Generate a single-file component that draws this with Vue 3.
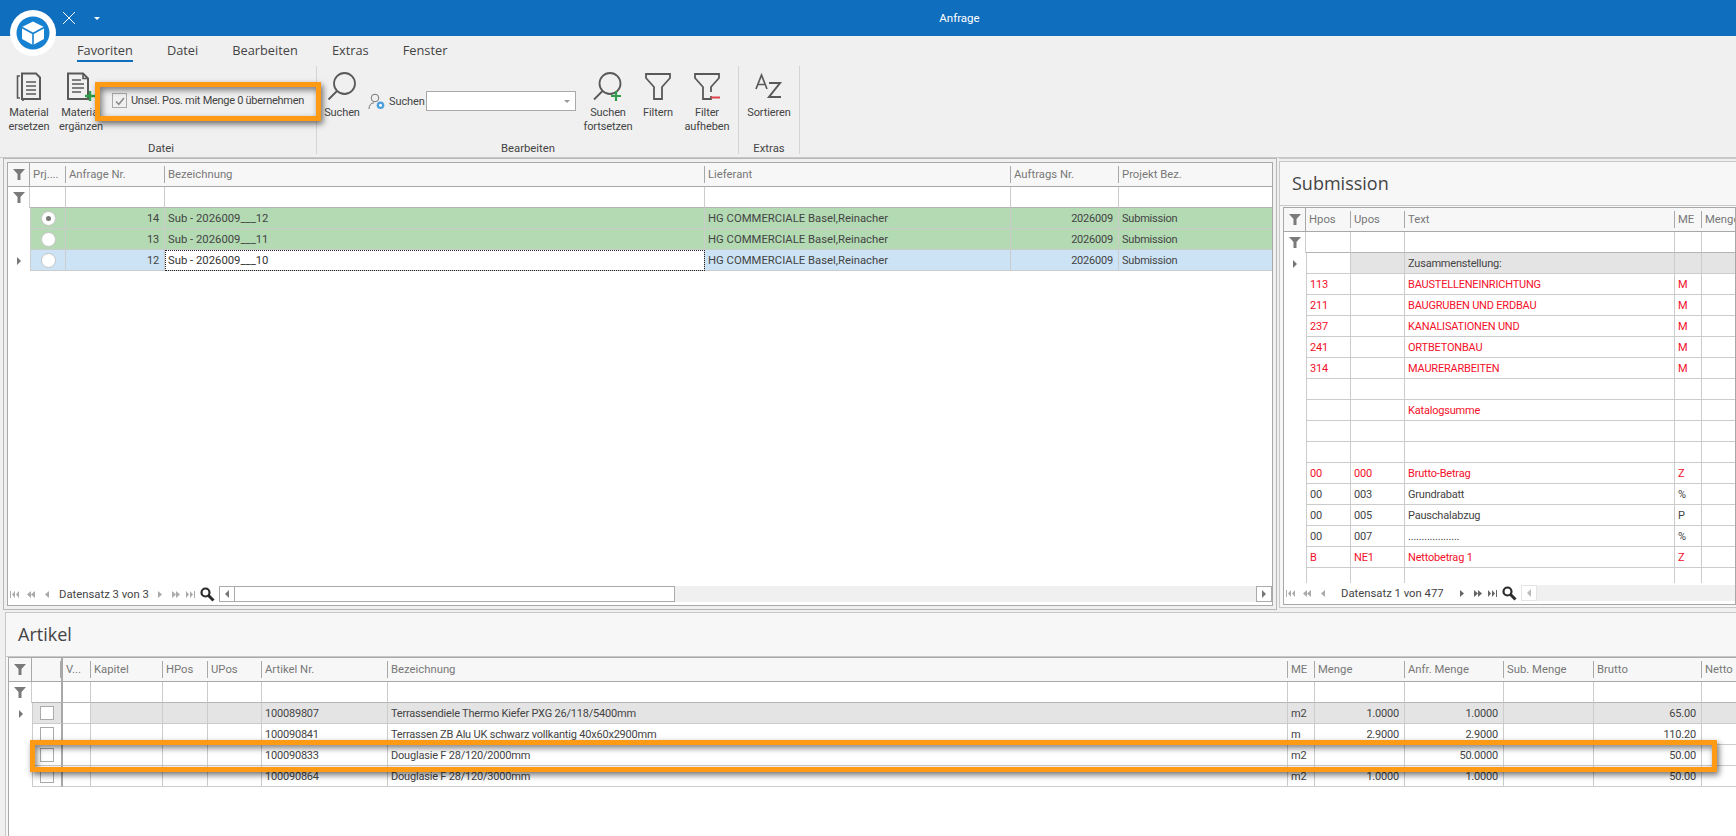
<template>
  <div class="app">
    <div class="titlebar">
      <svg class="qat-x" width="14" height="14" viewBox="0 0 14 14"><path d="M1 1l12 12M13 1L1 13" stroke="#fff" stroke-width="1" fill="none" /></svg>
      <span class="qat-caret"></span>
      <span class="title">Anfrage</span>
    </div>
    <svg class="logo" width="46" height="46" viewBox="0 0 46 46">
      <circle cx="23" cy="23" r="23" fill="#fff" />
      <circle cx="23" cy="23" r="16.5" fill="#1681d0" />
      <path d="M23 11.5l11 5.5v12l-11 6-11-6V17z" fill="#fff" />
      <path d="M12 17.500l11 6 11-6M23 23.500V35" stroke="#1681d0" stroke-width="1.600" fill="none" />
    </svg>

    <div class="ribbon">
      <div class="tabs">
        <span v-for="t in tabs" :key="t" class="tab" :class="{ active: t === 'Favoriten' }">{{ t }}</span>
      </div>
      <div class="groups">
        <div class="group group-datei">
          <div class="items">
            <div class="rbtn w46">
              <svg width="28" height="30" viewBox="0 0 28 30" fill="none" stroke="#595959" stroke-width="1.600">
                <path d="M5 4H2.500v22H5M8 29V7" />
                <path d="M7 1.500h14l4 4V27H7V1.500z" fill="#f0f0f0" stroke-width="2" />
                <path d="M11 10h10M11 14h10M11 18h10M11 22h10" />
              </svg>
              <span>Material<br />ersetzen</span>
            </div>
            <div class="rbtn w46 gap7">
              <svg width="30" height="30" viewBox="0 0 30 30" fill="none" stroke="#595959" stroke-width="1.600">
                <path d="M2 1.500h15l5 5V27H2V1.500z" stroke-width="2" />
                <path d="M17 1.500v5h5" />
                <path d="M6 8h9M6 12h12M6 16h12M6 20h9" />
                <path d="M24 19v10M19 24h10" stroke="#2e9e4a" stroke-width="2.400" />
              </svg>
              <span>Material<br />ergänzen</span>
            </div>
            <label class="check-line">
              <span class="check"><svg width="12" height="12" viewBox="0 0 12 12"><path d="M2 6.500l2.800 2.800L10 3" stroke="#8a8a8a" stroke-width="1.500" fill="none" /></svg></span>
              Unsel. Pos. mit Menge 0 übernehmen
            </label>
          </div>
          <div class="group-label">Datei</div>
        </div>

        <div class="group group-bearb">
          <div class="items">
            <div class="rbtn w40">
              <svg width="30" height="30" viewBox="0 0 30 30" fill="none" stroke="#595959" stroke-width="1.800">
                <circle cx="17.500" cy="11.500" r="10.500" />
                <path d="M10 19L1.500 27.500" />
              </svg>
              <span>Suchen</span>
            </div>
            <div class="search-line">
              <svg width="17" height="17" viewBox="0 0 17 17" fill="none">
                <circle cx="7" cy="5" r="3.800" stroke="#777" />
                <path d="M1 16c0-4 2-6 5-6.200" stroke="#777" />
                <circle cx="12.500" cy="12.300" r="3.800" fill="#4a9fdc" />
                <circle cx="12.500" cy="12.300" r="1.500" fill="#fff" />
              </svg>
              <span class="search-text">Suchen</span>
              <span class="combo"><i></i></span>
            </div>
            <div class="rbtn w60">
              <svg width="32" height="30" viewBox="0 0 32 30" fill="none" stroke="#595959" stroke-width="1.800">
                <circle cx="18" cy="11.500" r="10.500" />
                <path d="M10.500 19L2 27.500" />
                <path d="M24 19v10M19 24h10" stroke="#2e9e4a" stroke-width="2.200" />
              </svg>
              <span>Suchen<br />fortsetzen</span>
            </div>
            <div class="rbtn w40">
              <svg width="28" height="30" viewBox="0 0 28 30" fill="none" stroke="#595959" stroke-width="1.800">
                <path d="M2 2h24v4l-8 9v12h-8V15L2 6z" />
              </svg>
              <span>Filtern</span>
            </div>
            <div class="rbtn w50 gap2">
              <svg width="28" height="30" viewBox="0 0 28 30" fill="none" stroke="#595959" stroke-width="1.800">
                <path d="M18 24v3h-8V15L2 6V2h24v4l-8 9v5" />
                <path d="M18 25.500h9" stroke="#e0424a" stroke-width="2" />
              </svg>
              <span>Filter<br />aufheben</span>
            </div>
          </div>
          <div class="group-label bearb-label">Bearbeiten</div>
        </div>

        <div class="group group-extras">
          <div class="items">
            <div class="rbtn w60">
              <svg width="28" height="30" viewBox="0 0 28 30" fill="none" stroke="#595959" stroke-width="1.700">
                <path d="M1 17L6.500 3 12 17M3 12.500h7" />
                <path d="M14 11h11L14 25h12" stroke-width="2" />
              </svg>
              <span>Sortieren</span>
            </div>
          </div>
          <div class="group-label">Extras</div>
        </div>
      </div>
    </div>

    <div class="main">
      <div class="top-split">
        <div class="panel-left">
          <div class="grid">
            <div class="row head" :style="colStyle(anfrageCols)">
              <div class="cell ind"><svg class="funnel" width="12" height="11" viewBox="0 0 12 11"><path d="M0 0h12L7.500 5v6h-3V5z" /></svg></div>
              <div v-for="c in anfrageCols.slice(1)" :key="c.t" class="cell hcell">{{ c.t }}</div>
            </div>
            <div class="row filter" :style="colStyle(anfrageCols)">
              <div class="cell ind"><svg class="funnel" width="12" height="11" viewBox="0 0 12 11"><path d="M0 0h12L7.500 5v6h-3V5z" /></svg></div>
              <div v-for="c in anfrageCols.slice(1)" :key="c.t" class="cell"></div>
            </div>
            <div v-for="r in anfrageRows" :key="r.nr" class="row data" :class="r.cls" :style="colStyle(anfrageCols)">
              <div class="cell ind"><i v-if="r.current" class="pointer"></i></div>
              <div class="cell first tinted center"><span class="radio" :class="{ on: r.on }"></span></div>
              <div class="cell tinted right">{{ r.nr }}</div>
              <div class="cell tinted wide" :class="{ focus: r.current }">{{ r.bez }}</div>
              <div class="cell tinted wide">HG COMMERCIALE Basel,Reinacher</div>
              <div class="cell tinted right">2026009</div>
              <div class="cell tinted">Submission</div>
            </div>
            <div class="spacer"></div>
            <div class="pager">
              <svg v-for="n in navBack" :key="n.w" class="nav" :style="{ marginRight: n.m + 'px' }" :width="n.w" height="9" :viewBox="`0 0 ${n.w} 9`"><path :d="n.d" fill="#aaa" /></svg>
              <span class="pager-text w-left">Datensatz 3 von 3</span>
              <svg v-for="n in navFwd" :key="n.w" class="nav" :style="{ marginRight: n.m + 'px' }" :width="n.w" height="9" :viewBox="`0 0 ${n.w} 9`"><path :d="n.d" fill="#aaa" /></svg>
              <svg class="lens" width="15" height="15" viewBox="0 0 15 15" fill="none" stroke="#2b2b2b"><circle cx="5.500" cy="5.500" r="4" stroke-width="2.200" /><path d="M8.500 8.500l5 5" stroke-width="3" /></svg>
              <div class="hscroll">
                <span class="sb-btn"><i class="arr-l"></i></span>
                <span class="sb-thumb"></span>
                <span class="sb-fill"></span>
                <span class="sb-btn end"><i class="arr-r"></i></span>
              </div>
            </div>
          </div>
        </div>

        <div class="panel-right">
          <div class="pane">
            <div class="pane-title">Submission</div>
            <div class="grid-wrap">
              <div class="grid">
                <div class="row head" :style="colStyle(subCols)">
                  <div class="cell ind"><svg class="funnel" width="12" height="11" viewBox="0 0 12 11"><path d="M0 0h12L7.500 5v6h-3V5z" /></svg></div>
                  <div v-for="c in subCols.slice(1)" :key="c.t" class="cell hcell">{{ c.t }}</div>
                </div>
                <div class="row filter" :style="colStyle(subCols)">
                  <div class="cell ind"><svg class="funnel" width="12" height="11" viewBox="0 0 12 11"><path d="M0 0h12L7.500 5v6h-3V5z" /></svg></div>
                  <div v-for="c in subCols.slice(1)" :key="c.t" class="cell"></div>
                </div>
                <div class="rows-clip">
                  <div v-for="(r, i) in subRows" :key="i" class="row data" :class="{ red: r[4], grey: i === 0 }" :style="colStyle(subCols)">
                    <div class="cell ind"><i v-if="i === 0" class="pointer"></i></div>
                    <div class="cell first">{{ r[0] }}</div>
                    <div class="cell tinted">{{ r[1] }}</div>
                    <div class="cell tinted">{{ r[2] }}</div>
                    <div class="cell tinted">{{ r[3] }}</div>
                    <div class="cell tinted"></div>
                  </div>
                </div>
                <div class="pager">
                  <svg v-for="n in navBack" :key="n.w" class="nav" :style="{ marginRight: n.m + 'px' }" :width="n.w" height="9" :viewBox="`0 0 ${n.w} 9`"><path :d="n.d" fill="#aaa" /></svg>
                  <span class="pager-text w-right">Datensatz 1 von 477</span>
                  <svg v-for="n in navFwd" :key="n.w" class="nav" :style="{ marginRight: n.m + 'px' }" :width="n.w" height="9" :viewBox="`0 0 ${n.w} 9`"><path :d="n.d" fill="#666" /></svg>
                  <svg class="lens" width="15" height="15" viewBox="0 0 15 15" fill="none" stroke="#2b2b2b"><circle cx="5.500" cy="5.500" r="4" stroke-width="2.200" /><path d="M8.500 8.500l5 5" stroke-width="3" /></svg>
                  <div class="hscroll flat">
                    <span class="sb-btn"><i class="arr-l"></i></span>
                    <span class="sb-fill"></span>
                  </div>
                </div>
              </div>
            </div>
          </div>
        </div>
      </div>

      <div class="panel-bottom">
        <div class="pane-title artikel">Artikel</div>
        <div class="grid-wrap bottom">
          <div class="grid">
            <div class="row head" :style="colStyle(artCols)">
              <div class="cell ind"><svg class="funnel" width="12" height="11" viewBox="0 0 12 11"><path d="M0 0h12L7.500 5v6h-3V5z" /></svg></div>
              <div class="cell hcell thick"></div>
              <div v-for="c in artCols.slice(2)" :key="c.t" class="cell hcell">{{ c.t }}</div>
            </div>
            <div class="row filter" :style="colStyle(artCols)">
              <div class="cell ind"><svg class="funnel" width="12" height="11" viewBox="0 0 12 11"><path d="M0 0h12L7.500 5v6h-3V5z" /></svg></div>
              <div class="cell thick"></div>
              <div v-for="c in artCols.slice(2)" :key="c.t" class="cell"></div>
            </div>
            <div v-for="(r, i) in artRows" :key="r.nr" class="row data" :class="{ grey: i === 0 }" :style="colStyle(artCols)">
              <div class="cell ind"><i v-if="i === 0" class="pointer"></i></div>
              <div class="cell first tinted thick center"><span class="box"></span></div>
              <div class="cell"></div>
              <div class="cell tinted"></div>
              <div class="cell tinted"></div>
              <div class="cell tinted"></div>
              <div class="cell tinted">{{ r.nr }}</div>
              <div class="cell tinted">{{ r.bez }}</div>
              <div class="cell tinted">{{ r.me }}</div>
              <div class="cell tinted right">{{ r.menge }}</div>
              <div class="cell tinted right">{{ r.anfr }}</div>
              <div class="cell tinted"></div>
              <div class="cell tinted right">{{ r.brutto }}</div>
              <div class="cell tinted"></div>
            </div>
          </div>
        </div>
      </div>
    </div>

    <div class="mark mark-check"></div>
    <div class="mark mark-row"></div>
  </div>
</template>

<script setup>
const tabs = ['Favoriten', 'Datei', 'Bearbeiten', 'Extras', 'Fenster']

const anfrageCols = [
  { w: 22 }, { t: 'Prj....', w: 36 }, { t: 'Anfrage Nr.', w: 99 }, { t: 'Bezeichnung', w: 540 },
  { t: 'Lieferant', w: 306 }, { t: 'Auftrags Nr.', w: 108 }, { t: 'Projekt Bez.' }
]
const anfrageRows = [
  { nr: 14, bez: 'Sub - 2026009___12', cls: 'green', on: true },
  { nr: 13, bez: 'Sub - 2026009___11', cls: 'green' },
  { nr: 12, bez: 'Sub - 2026009___10', cls: 'blue', current: true }
]

const subCols = [
  { w: 22 }, { t: 'Hpos', w: 45 }, { t: 'Upos', w: 54 }, { t: 'Text', w: 270 }, { t: 'ME', w: 27 }, { t: 'Menge' }
]
const subRows = [
  ['', '', 'Zusammenstellung:', ''],
  ['113', '', 'BAUSTELLENEINRICHTUNG', 'M', 1],
  ['211', '', 'BAUGRUBEN UND ERDBAU', 'M', 1],
  ['237', '', 'KANALISATIONEN UND', 'M', 1],
  ['241', '', 'ORTBETONBAU', 'M', 1],
  ['314', '', 'MAURERARBEITEN', 'M', 1],
  ['', '', '', ''],
  ['', '', 'Katalogsumme', '', 1],
  ['', '', '', ''],
  ['', '', '', ''],
  ['00', '000', 'Brutto-Betrag', 'Z', 1],
  ['00', '003', 'Grundrabatt', '%'],
  ['00', '005', 'Pauschalabzug', 'P'],
  ['00', '007', '...................', '%'],
  ['B', 'NE1', 'Nettobetrag 1', 'Z', 1],
  ['', '', '', '']
]

const artCols = [
  { w: 23 }, { w: 31 }, { t: 'V...', w: 28 }, { t: 'Kapitel', w: 72 }, { t: 'HPos', w: 45 }, { t: 'UPos', w: 54 },
  { t: 'Artikel Nr.', w: 126 }, { t: 'Bezeichnung', w: 900 }, { t: 'ME', w: 27 }, { t: 'Menge', w: 90 },
  { t: 'Anfr. Menge', w: 99 }, { t: 'Sub. Menge', w: 90 }, { t: 'Brutto', w: 108 }, { t: 'Netto' }
]
const artRows = [
  { nr: '100089807', bez: 'Terrassendiele Thermo Kiefer PXG 26/118/5400mm', me: 'm2', menge: '1.0000', anfr: '1.0000', brutto: '65.00' },
  { nr: '100090841', bez: 'Terrassen ZB Alu UK schwarz vollkantig 40x60x2900mm', me: 'm', menge: '2.9000', anfr: '2.9000', brutto: '110.20' },
  { nr: '100090833', bez: 'Douglasie F 28/120/2000mm', me: 'm2', menge: '', anfr: '50.0000', brutto: '50.00' },
  { nr: '100090864', bez: 'Douglasie F 28/120/3000mm', me: 'm2', menge: '1.0000', anfr: '1.0000', brutto: '50.00' }
]

const navBack = [
  { w: 9, m: 8, d: 'M0 1h1v7H0zM5 1v7L2 4.500zM9 1v7L6 4.500z' },
  { w: 8, m: 10, d: 'M4 1v7L0 4.500zM8 1v7L4 4.500z' },
  { w: 4, m: 9, d: 'M4 1v7L0 4.500z' }
]
const navFwd = [
  { w: 4, m: 10, d: 'M0 1v7l4-3.500z' },
  { w: 8, m: 6, d: 'M0 1v7l4-3.500zM4 1v7l4-3.500z' },
  { w: 9, m: 6, d: 'M0 1v7l3-3.500zM4 1v7l3-3.500zM8 1h1v7H8z' }
]

function colStyle(cols) {
  return { gridTemplateColumns: cols.map(c => (c.w ? c.w + 'px' : '1fr')).join(' ') }
}
</script>

<style>
html, body { margin: 0; background: #f0f0f0; }
</style>

<style scoped>
.app {
  position: relative;
  width: 1736px;
  height: 836px;
  overflow: hidden;
  background: #f0f0f0;
  font-family: Roboto, "Open Sans", sans-serif;
  font-size: 11.300px;
  color: #444;
  display: flex;
  flex-direction: column;
}
.titlebar {
  position: relative;
  flex: none;
  height: 36px;
  background: #106ebe;
  display: flex;
  align-items: center;
  padding-left: 62px;
  box-sizing: border-box;
}
.qat-x { margin-top: -1px; }
.qat-caret {
  margin-left: 18px;
  width: 0; height: 0;
  border-left: 3px solid transparent;
  border-right: 3px solid transparent;
  border-top: 3px solid #fff;
}
.title {
  position: absolute;
  left: 0; right: 0;
  padding-left: 183px;
  text-align: center;
  color: #fff;
  font-size: 11.500px;
}
.logo { position: absolute; left: 10px; top: 10px; }

.ribbon {
  flex: none;
  height: 122px;
  box-sizing: border-box;
  border-bottom: 1px solid #c8c8c8;
  padding-bottom: 3px;
}
.tabs { height: 30px; display: flex; padding-left: 77px; align-items: flex-start; }
.tab {
  font-family: "Open Sans", sans-serif;
  font-size: 12.800px;
  line-height: 19px;
  padding-top: 5px;
  height: 26px;
  margin-right: 34px;
  box-sizing: border-box;
  color: #444;
}
.tab.active { border-bottom: 2px solid #106ebe; }
.groups { display: flex; height: 88px; }
.group {
  position: relative;
  box-sizing: border-box;
  border-right: 1px solid #d4d4d4;
  display: flex;
  flex-direction: column;
}
.group-datei { width: 317px; padding-left: 6px; }
.group-bearb { width: 422px; padding-left: 5px; }
.group-extras { width: 61px; }
.items { display: flex; flex: 1; align-items: flex-start; padding-top: 6px; }
.group-label { text-align: center; height: 13px; line-height: 16px; font-size: 11.300px; color: #444; }
.bearb-label { padding-right: 4px; }
.rbtn {
  display: flex;
  flex-direction: column;
  align-items: center;
  text-align: center;
  line-height: 14px;
  font-size: 11px;
  letter-spacing: -0.1px;
}
.rbtn svg { height: 30px; margin-bottom: 4px; }
.w40 { width: 40px; }
.w46 { width: 46px; }
.w50 { width: 50px; }
.w60 { width: 60px; }
.gap7 { margin-left: 6px; }
.gap2 { margin-left: 4px; }
.check-line {
  display: flex;
  align-items: center;
  font-size: 11px;
  letter-spacing: -0.28px;
  margin: 21px 0 0 8px;
  white-space: nowrap;
}
.check {
  width: 13px; height: 13px;
  border: 1px solid #aaa;
  margin-right: 4px;
  display: flex;
  align-items: center;
  justify-content: center;
}
.search-line { display: flex; align-items: center; margin: 19px 2px 0 6px; }
.search-text { margin: 0 3px 0 4px; font-size: 11px; letter-spacing: -0.1px; width: 34px; }
.combo {
  position: relative;
  display: block;
  width: 150px; height: 20px;
  box-sizing: border-box;
  background: #fff;
  border: 1px solid #aaa;
}
.combo i {
  position: absolute;
  right: 5px; top: 8px;
  border-left: 3px solid transparent;
  border-right: 3px solid transparent;
  border-top: 3px solid #999;
}

.main { flex: 1; display: flex; flex-direction: column; min-height: 0; }
.top-split { flex: none; height: 452px; display: flex; }
.panel-left {
  margin-left: 3px;
  width: 1274px;
  box-sizing: border-box;
  border: 1px solid #b8b8b8;
  padding: 3px;
  display: flex;
}
.panel-right {
  margin-left: 2px;
  flex: 1;
  border-top: 1px solid #c8c8c8;
  padding-top: 2px;
  min-width: 0;
}
.pane {
  height: 447px;
  box-sizing: border-box;
  border: 1px solid #c8c8c8;
  border-right: 0;
  background: #f7f7f7;
  display: flex;
  flex-direction: column;
}
.pane-title {
  flex: none;
  height: 44px;
  line-height: 42px;
  padding-left: 12px;
  font-family: "Open Sans", sans-serif;
  font-size: 18px;
  color: #444;
  background: #f7f7f7;
  border-bottom: 1px solid #c8c8c8;
  box-sizing: border-box;
}
.grid-wrap { flex: 1; min-height: 0; display: flex; padding: 1px 0 2px 3px; }
.grid {
  flex: 1;
  min-width: 0;
  background: #fff;
  border: 1px solid #a8a8a8;
  display: flex;
  flex-direction: column;
  overflow: hidden;
}
.spacer { flex: 1; }
.rows-clip { flex: 1; min-height: 0; overflow: hidden; }

.row { display: grid; flex: none; height: 21px; }
.cell {
  box-sizing: border-box;
  border-right: 1px solid #ccc;
  border-bottom: 1px solid #ccc;
  padding: 0 3px;
  line-height: 22px;
  white-space: nowrap;
  overflow: hidden;
}
.data .cell { font-size: 11px; letter-spacing: -0.2px; }
.data .cell.wide { font-size: 11.300px; letter-spacing: 0; }
.cell:last-child { border-right: 0; }
.right { text-align: right; padding-right: 5px; }
.center { display: flex; align-items: center; justify-content: center; padding: 0; }
.ind {
  border-right: 0;
  border-bottom: 0;
  padding: 0;
  display: flex;
  align-items: center;
  justify-content: center;
}
.first { border-left: 1px solid #ccc; }

.head { height: 24px; background: #f7f7f7; }
.head .cell {
  border-bottom: 1px solid #a8a8a8;
  border-right: 0;
  color: #777;
  line-height: 24px;
  position: relative;
}
.head .ind { border-right: 1px solid #a8a8a8; }
.hcell::after {
  content: '';
  position: absolute;
  right: 0; top: 3px; bottom: 3px;
  width: 1px;
  background: #a8a8a8;
}
.hcell:last-child::after { display: none; }
.filter .cell { border-bottom: 1px solid #b4b4b4; }
.filter .ind { border-right: 1px solid #ccc; border-bottom: 0; }
.funnel { fill: #7a7a7a; }
.pointer {
  border-left: 4px solid #777;
  border-top: 4px solid transparent;
  border-bottom: 4px solid transparent;
}
.green .tinted { background: #b3dab3; }
.blue .tinted { background: #cce3f5; }
.grey .tinted { background: #e4e4e4; }
.red .cell { color: #f4102a; }
.blue .focus {
  background: #fff;
  outline: 1px dotted #222;
  outline-offset: -1px;
  color: #333;
}
.thick { border-right: 2px solid #a8a8a8 !important; }
.radio {
  width: 13px; height: 13px;
  border-radius: 50%;
  background: #fff;
  border: 1px solid #c4c4c4;
  display: flex;
  align-items: center;
  justify-content: center;
}
.radio.on::before {
  content: '';
  width: 5px; height: 5px;
  border-radius: 50%;
  background: #777;
}
.box {
  width: 14px; height: 14px;
  box-sizing: border-box;
  border: 1px solid #aaa;
  background: #fff;
}

.pager {
  flex: none;
  height: 20px;
  display: flex;
  align-items: center;
  padding-left: 2px;
  margin-bottom: 1px;
  background: #fff;
}
.nav { flex: none; }
.pager-text { color: #444; }
.w-left { width: 100px; padding-left: 1px; box-sizing: border-box; }
.w-right { width: 126px; padding-left: 7px; box-sizing: border-box; }
.lens { flex: none; margin: 0 4px 0 -1px; }
.hscroll { flex: 1; height: 16px; display: flex; min-width: 0; background: #f0f0f0; }
.sb-btn {
  flex: none;
  width: 16px;
  box-sizing: border-box;
  border: 1px solid #aaa;
  background: #fff;
  display: flex;
  align-items: center;
  justify-content: center;
}
.sb-thumb { flex: none; width: 440px; box-sizing: border-box; border: 1px solid #aaa; border-left: 0; background: #fff; }
.sb-fill { flex: 1; }
.flat .sb-btn { border-color: #e4e4e4; }
.flat .arr-l { border-right-color: #bbb; }
.arr-l { border-right: 4px solid #777; border-top: 4px solid transparent; border-bottom: 4px solid transparent; }
.arr-r { border-left: 4px solid #777; border-top: 4px solid transparent; border-bottom: 4px solid transparent; }

.panel-bottom {
  flex: 1;
  min-height: 0;
  margin: 2px 0 0 5px;
  border-top: 1px solid #c8c8c8;
  border-left: 1px solid #c8c8c8;
  background: #f7f7f7;
  display: flex;
  flex-direction: column;
}
.artikel { padding-left: 12px; }
.bottom { padding: 0 0 0 2px; }
.bottom .grid { border-bottom: 0; border-right: 0; }

.mark {
  position: absolute;
  box-sizing: border-box;
  border: 5px solid #ff9a14;
  box-shadow: 2px 3px 6px rgba(0, 0, 0, 0.55), inset 2px 3px 6px rgba(0, 0, 0, 0.5);
  pointer-events: none;
}
.mark-check { left: 95px; top: 82px; width: 226px; height: 39px; }
.mark-row { left: 30px; top: 740px; width: 1687px; height: 32px; }
</style>
